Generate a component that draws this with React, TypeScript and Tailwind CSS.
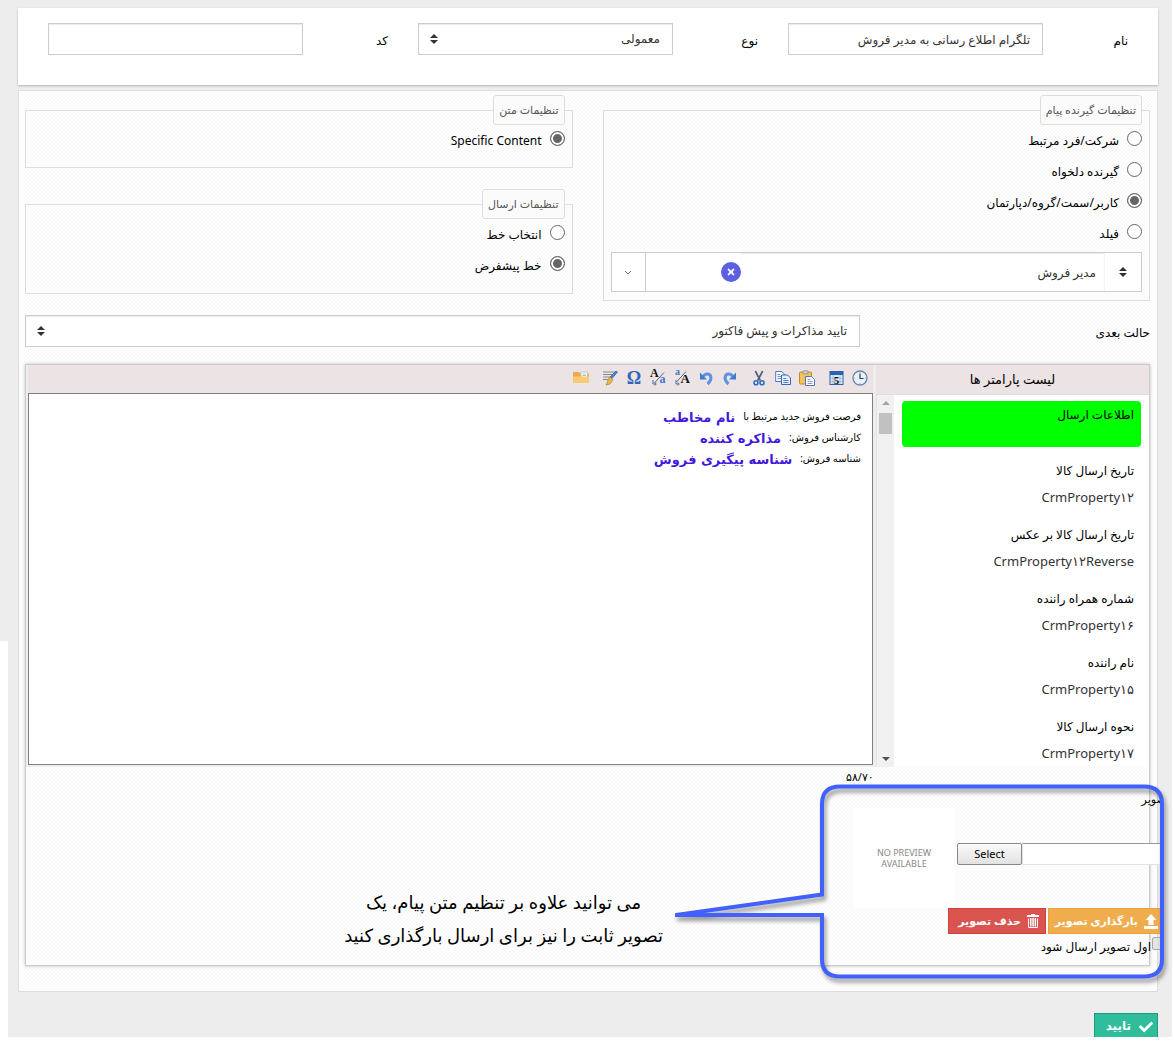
import React, { useState } from "react";
import { FaCheck, FaTimes } from "react-icons/fa";

const SortIcon = ({ className = "" }: { className?: string }) => (
  <svg width="8" height="10" viewBox="0 0 8 10" className={className} aria-hidden="true">
    <path d="M4 0 8 4H0zM0 6h8l-4 4z" fill="#333" />
  </svg>
);

function SelectBox({ id, value }: { id: string; value: string }) {
  return (
    <div className="relative min-w-0 flex-1">
      <select
        id={id}
        className="h-8 w-full appearance-none border border-[#ccc] bg-white pr-3 pl-8 text-xs text-[#333] shadow-[inset_0_1px_1px_rgba(0,0,0,0.08)]"
      >
        <option>{value}</option>
      </select>
      <SortIcon className="pointer-events-none absolute top-[11px] left-3" />
    </div>
  );
}

function TopField({ id, label, children }: { id: string; label: string; children: React.ReactNode }) {
  return (
    <div className="flex min-w-0 flex-1 items-center">
      <label htmlFor={id} className="w-1/4 shrink-0 pt-1">
        {label}
      </label>
      {children}
    </div>
  );
}

const inputClass =
  "h-8 min-w-0 flex-1 border border-[#ccc] bg-white px-3 text-xs text-[#333] shadow-[inset_0_1px_1px_rgba(0,0,0,0.08)]";

function Group({ title, className = "", children }: { title: string; className?: string; children: React.ReactNode }) {
  return (
    <fieldset className={`min-w-0 border border-[#ddd] px-[7px] ${className}`}>
      <legend className="h-[30px] rounded-[3px] border border-[#ddd] bg-[#fbfbfb] px-[5px] text-[11px] leading-7 text-[#555]">
        {title}
      </legend>
      {children}
    </fieldset>
  );
}

function Radios({ name, options, initial }: { name: string; options: string[]; initial: number }) {
  const [picked, setPicked] = useState(initial);
  return (
    <div>
      {options.map((o, i) => (
        <label key={o} className="flex h-[31px] items-start gap-2 pt-1.5 leading-5">
          <input
            type="radio"
            name={name}
            checked={picked === i}
            onChange={() => setPicked(i)}
            className="size-[15px] shrink-0 appearance-none rounded-full border border-[#666] bg-white checked:bg-[#666] checked:shadow-[inset_0_0_0_2px_#fff]"
          />
          {o}
        </label>
      ))}
    </div>
  );
}

const Svg = ({ children }: { children: React.ReactNode }) => (
  <svg width="16" height="16" viewBox="0 0 16 16" className="overflow-visible [direction:ltr]" aria-hidden="true">
    {children}
  </svg>
);

const toolGroups: { name: string; icon: React.ReactNode }[][] = [
  [
    {
      name: "زمان",
      icon: (
        <Svg>
          <circle cx="8" cy="8" r="7" fill="#e9f1fb" stroke="#6f87a8" strokeWidth="1.3" />
          <path d="M8 3.5V8.5H11.5" fill="none" stroke="#333f55" strokeWidth="1.2" />
          <path d="M8 1.8v1M8 13.2v1M1.8 8h1M13.2 8h1" stroke="#6f87a8" strokeWidth="0.8" />
        </Svg>
      ),
    },
    {
      name: "تاریخ",
      icon: (
        <Svg>
          <rect x="2" y="1.5" width="13" height="13" fill="#dce8f7" stroke="#2f5fa5" />
          <rect x="2" y="1.5" width="13" height="3.5" fill="#2c62b4" />
          <path d="M5 5v9M12 5v9M2 8.3h13M2 11.5h13" stroke="#9db8dd" strokeWidth="0.8" />
          <text x="8.5" y="13.5" fontSize="11" fontWeight="bold" fontFamily="Liberation Serif" textAnchor="middle" fill="#111">5</text>
        </Svg>
      ),
    },
  ],
  [
    {
      name: "چسباندن",
      icon: (
        <Svg>
          <rect x="0.5" y="2" width="12" height="12" rx="1" fill="#f3c25c" stroke="#c08a2d" />
          <rect x="4" y="0.8" width="5" height="3" rx="1" fill="#cfd3da" stroke="#7f8794" strokeWidth="0.8" />
          <path d="M6.5 6.5h6l3 3v6h-9z" fill="#fff" stroke="#5577aa" />
          <path d="M8.5 9.5h3M8.5 11.5h5M8.5 13.5h5" stroke="#6c93cf" strokeWidth="0.9" />
        </Svg>
      ),
    },
    {
      name: "رونوشت",
      icon: (
        <Svg>
          <path d="M.7 1.5h6l2.5 2.5v7.5H.7z" fill="#fff" stroke="#4a78c0" />
          <path d="M2.5 4.5h3M2.5 6.5h4.5M2.5 8.5h4.5" stroke="#6c93cf" />
          <path d="M6.5 5h6l3 3v6.500h-9z" fill="#e6f0ff" stroke="#3567b5" />
          <path d="M8.3 8.5h3M8.3 10.5h5.2M8.3 12.5h5.2" stroke="#4a7fd0" />
        </Svg>
      ),
    },
    {
      name: "برش",
      icon: (
        <Svg>
          <path d="M4.3 1 9.3 10.5M11.700 1 6.700 10.5" stroke="#55637a" strokeWidth="1.7" />
          <circle cx="5" cy="12.700" r="2" fill="none" stroke="#2f6bc4" strokeWidth="1.600" />
          <circle cx="11" cy="12.700" r="2" fill="none" stroke="#2f6bc4" strokeWidth="1.600" />
        </Svg>
      ),
    },
  ],
  [
    {
      name: "انجام دوباره",
      icon: (
        <Svg>
          <path d="M6.500 14C1 9.500 3 4 6.500 4c2 0 3.500 1 4 2.500" fill="none" stroke="#5a93e0" strokeWidth="3" />
          <path d="M14 2.500V9.500H7z" fill="#3f7dd3" />
        </Svg>
      ),
    },
    {
      name: "واگرد",
      icon: (
        <Svg>
          <path d="M9.500 14C15 9.500 13 4 9.500 4c-2 0-3.500 1-4 2.500" fill="none" stroke="#5a93e0" strokeWidth="3" />
          <path d="M2 2.500V9.500h7z" fill="#3f7dd3" />
        </Svg>
      ),
    },
    {
      name: "حروف بزرگ",
      icon: (
        <Svg>
          <text x="1" y="5" fontSize="10" fontWeight="bold" fontFamily="Liberation Serif" fill="#3a78d0">a</text>
          <text x="6.500" y="13" fontSize="13" fontWeight="bold" fontFamily="Liberation Serif" fill="#111">A</text>
          <path d="M2.500 12 12 1.500" stroke="#555" strokeWidth="0.900" />
          <path d="M2 10v4h3M3.800 12.500l1.500 1.500-1.500 1.500" fill="none" stroke="#4d6fa8" />
        </Svg>
      ),
    },
    {
      name: "حروف کوچک",
      icon: (
        <Svg>
          <text x="0" y="7" fontSize="12" fontWeight="bold" fontFamily="Liberation Serif" fill="#111">A</text>
          <text x="9.500" y="13" fontSize="12" fontWeight="bold" fontFamily="Liberation Serif" fill="#3a78d0">a</text>
          <path d="M4.500 13 14 2.500" stroke="#555" strokeWidth="0.900" />
          <path d="M3 10v4h3M4.800 12.500l1.500 1.500-1.500 1.500" fill="none" stroke="#4d6fa8" />
        </Svg>
      ),
    },
    {
      name: "نماد",
      icon: (
        <Svg>
          <text x="8" y="14" fontSize="18" fontWeight="bold" fontFamily="Liberation Serif" textAnchor="middle" fill="#2f66b8">Ω</text>
        </Svg>
      ),
    },
    {
      name: "قالب",
      icon: (
        <Svg>
          <path d="M1 2h12M1 4.500h10M1 7h8M1 9.500h5" stroke="#8a8a8a" />
          <path d="m15.500 2-5.500 6.500-2-1.500 6-6z" fill="#4a82d4" stroke="#2d5ca6" strokeWidth="0.700" />
          <path d="M8 7 10.500 9C10 13 8 14.500 4 15 6 13 5.500 8.500 8 7z" fill="#eab84a" stroke="#a87a1c" strokeWidth="0.700" />
        </Svg>
      ),
    },
  ],
  [
    {
      name: "پوشه",
      icon: (
        <Svg>
          <path d="M0 2h6l1 1.500h9V13H0z" fill="#f0a94a" />
          <path d="M8 2h6.500v6H8z" fill="#fff" stroke="#b9bec8" strokeWidth="0.800" />
          <path d="M9.500 4h3.500M9.500 5.500h3.500" stroke="#9aa3b3" strokeWidth="0.700" />
          <path d="M0 6.500h16V13H0z" fill="#fbcb74" />
        </Svg>
      ),
    },
  ],
];

const params = [
  ["تاریخ ارسال کالا", "CrmProperty۱۲"],
  ["تاریخ ارسال کالا بر عکس", "CrmProperty۱۲Reverse"],
  ["شماره همراه راننده", "CrmProperty۱۶"],
  ["نام راننده", "CrmProperty۱۵"],
  ["نحوه ارسال کالا", "CrmProperty۱۷"],
];

const message = [
  ["فرصت فروش جدید مرتبط با", "نام مخاطب"],
  ["کارشناس فروش:", "مذاکره کننده"],
  ["شناسه فروش:", "شناسه پیگیری فروش"],
];

const actionClass =
  "flex h-[26px] shrink-0 items-center gap-1.5 border pr-1.5 text-[11px] font-bold whitespace-nowrap text-white";

export default function App() {
  return (
    <div dir="rtl" className="bg-white pr-0.5 pb-1.5 font-['Noto_Sans','DejaVu_Sans',sans-serif] text-xs text-black">
      <main className="relative bg-[#ededed] pt-2 pr-3.5 pl-[18px]">
        <div className="absolute top-[641px] bottom-0 left-0 w-2 bg-white" />

        <section className="flex h-[77px] items-start gap-[30px] bg-white px-[30px] pt-[15px] shadow-[0_1px_2px_rgba(0,0,0,0.25)]">
          <TopField id="name" label="نام">
            <input id="name" defaultValue="تلگرام اطلاع رسانی به مدیر فروش" className={inputClass} />
          </TopField>
          <TopField id="kind" label="نوع">
            <SelectBox id="kind" value="معمولی" />
          </TopField>
          <TopField id="code" label="کد">
            <input id="code" className={inputClass} />
          </TopField>
        </section>

        <section className="mt-[5px] border border-[#ddd] bg-[conic-gradient(#fafafa_25%,#fefefe_0_50%,#fafafa_0_75%,#fefefe_0)] bg-[length:4px_4px] pt-1 pr-[7px] pb-[25px] pl-1.5">
          <div className="grid grid-cols-2 items-start gap-[30px]">
            <Group title="تنظیمات گیرنده پیام" className="pb-2">
              <Radios
                name="receiver"
                initial={2}
                options={["شرکت/فرد مرتبط", "گیرنده دلخواه", "کاربر/سمت/گروه/دپارتمان", "فیلد"]}
              />
              <div className="mt-[3px] flex h-10 items-center border border-[#ccc] bg-white">
                <button type="button" aria-label="نوع گیرنده" className="flex h-full w-9 items-center justify-center">
                  <SortIcon />
                </button>
                <input
                  aria-label="گیرنده"
                  defaultValue="مدیر فروش"
                  className="h-full min-w-0 flex-1 border-r border-[#f3f3f3] bg-white px-2 text-xs text-[#333] shadow-[inset_0_1px_1px_rgba(0,0,0,0.08)]"
                />
                <button
                  type="button"
                  aria-label="حذف گیرنده"
                  className="ml-[75px] flex size-5 items-center justify-center rounded-full bg-[#5b5fe0] text-white"
                >
                  <FaTimes size={10} />
                </button>
                <button
                  type="button"
                  aria-label="باز کردن فهرست"
                  className="flex h-full w-[34px] items-center justify-center border-r border-[#ccc]"
                >
                  <svg width="8" height="5" viewBox="0 0 8 5" aria-hidden="true">
                    <path d="m1 1 3 3 3-3" fill="none" stroke="#666" />
                  </svg>
                </button>
              </div>
            </Group>
            <div className="min-w-0">
              <Group title="تنظیمات متن" className="pb-[11px]">
                <Radios name="content" initial={0} options={["Specific Content"]} />
              </Group>
              <Group title="تنظیمات ارسال" className="mt-[21px] pb-3">
                <Radios name="line" initial={1} options={["انتخاب خط", "خط پیشفرض"]} />
              </Group>
            </div>
          </div>

          <div className="mt-3.5 flex items-center">
            <label htmlFor="next" className="w-[290px] shrink-0 pt-1">
              حالت بعدی
            </label>
            <SelectBox id="next" value="تایید مذاکرات و پیش فاکتور" />
          </div>

          <div className="relative mt-[17px] border border-[#ccc] shadow-[0_0_3px_rgba(0,0,0,0.25)]">
            <div className="flex h-[402px] bg-[#eee]">
              <div className="flex w-[273px] shrink-0 flex-col">
                <h2 className="flex h-[30px] items-center justify-center border-b border-[#ddd] bg-[#ece3e4] text-[13px]">
                  لیست پارامتر ها
                </h2>
                <div className="flex min-h-0 flex-1 bg-white">
                  <ul className="min-w-0 flex-1 overflow-hidden px-2 pt-1.5">
                    <li className="mb-3.5 h-[46px] rounded bg-[#0f0] px-[7px] pt-1 leading-5">اطلاعات ارسال</li>
                    {params.map(([title, key]) => (
                      <li key={key} className="mb-[18px] flex flex-col gap-1.5 px-[7px] leading-5">
                        <span>{title}</span>
                        <span className="text-[13px] leading-5 text-[#333]">{key}</span>
                      </li>
                    ))}
                  </ul>
                  <div className="flex w-[18px] flex-col items-center border-l border-[#e4e4e4] bg-[#f1f1f1] py-1.5">
                    <svg width="8" height="4" viewBox="0 0 8 4" aria-hidden="true">
                      <path d="M4 0 8 4H0z" fill="#a3a3a3" />
                    </svg>
                    <div className="mt-2 h-[21px] w-[13px] bg-[#c1c1c1]" />
                    <svg width="8" height="4" viewBox="0 0 8 4" className="mt-auto" aria-hidden="true">
                      <path d="M4 4 8 0H0z" fill="#505050" />
                    </svg>
                  </div>
                </div>
              </div>

              <div className="mr-[3px] flex min-w-0 flex-1 flex-col pl-0.5">
                <div className="flex h-7 items-center gap-[5px] bg-[#ece3e4] pr-px pb-0.5">
                  {toolGroups.map((g, i) => (
                    <div key={i} className="flex">
                      {g.map((t) => (
                        <button key={t.name} type="button" aria-label={t.name} className="flex h-6 w-6 items-center justify-center">
                          {t.icon}
                        </button>
                      ))}
                    </div>
                  ))}
                </div>
                <div
                  role="textbox"
                  aria-label="متن پیام"
                  contentEditable
                  suppressContentEditableWarning
                  className="mb-0.5 flex-1 border border-[#808080] bg-white px-[11px] pt-3 text-[10px] leading-[21px] outline-none"
                >
                  {message.map(([lead, field]) => (
                    <p key={field} className="flex h-[21px] items-center gap-2">
                      <span>{lead}</span>
                      <b className="pt-0.5 font-['DejaVu_Sans'] text-[13px] text-[#4318dc]">{field}</b>
                    </p>
                  ))}
                </div>
              </div>
            </div>

            <div className="flex h-[198px]">
              <div className="-mr-3 w-[340px] shrink-0 overflow-hidden">
                <div className="-mr-2 flex h-[41px] items-start justify-between">
                  <label htmlFor="file" className="pt-[22px] text-[11px] leading-5">
                    تصویر
                  </label>
                  <output className="ml-[25px] text-[11px] leading-5">۵۸/۷۰</output>
                </div>
                <div className="flex h-[100px] items-center">
                  <input
                    id="file"
                    className="mb-2 h-[22px] min-w-0 flex-1 border border-[#dfe3ee] border-t-[#999] bg-white px-2"
                  />
                  <button
                    type="button"
                    className="mb-2 h-[22px] w-[65px] rounded-[2px] border border-[#888] bg-linear-to-b from-[#fafafa] to-[#e2e2e2] text-[11px] leading-4"
                  >
                    Select
                  </button>
                  <div className="mr-[3px] ml-[33px] flex size-[100px] items-center justify-center bg-white text-center text-[9px] leading-[11px] text-[#888]">
                    NO PREVIEW
                    <br />
                    AVAILABLE
                  </div>
                </div>
                <div className="-mr-1 flex gap-0.5">
                  <button type="button" className={`${actionClass} w-[117px] border-[#eea236] bg-[#f0ad4e]`}>
                    <svg width="14" height="15" viewBox="0 0 14 15" className="shrink-0" aria-hidden="true">
                      <path d="M7 0 12.500 6H9.500v5h-5V6h-3zM0 12h14v3H0z" fill="#fff" />
                    </svg>
                    بارگذاری تصویر
                  </button>
                  <button type="button" className={`${actionClass} w-[98px] border-[#d43f3a] bg-[#d9534f]`}>
                    <svg width="12" height="14" viewBox="0 0 12 14" className="shrink-0" aria-hidden="true">
                      <path d="M4 0h4v1h4v2H0V1h4z" fill="#fff" />
                      <path d="M1.500 4.500v9h9v-9" fill="none" stroke="#fff" />
                      <path d="M3 4h1.500v8.500H3zM5.300 4h1.500v8.500H5.300zM7.600 4h1.500v8.500H7.600z" fill="#fff" />
                    </svg>
                    حذف تصویر
                  </button>
                </div>
                <label className="-mr-1 flex items-start gap-px pt-[3px] leading-5">
                  <input type="checkbox" className="size-[13px] shrink-0 appearance-none rounded-[2px] border border-[#aaa] bg-[#e4e4e4]" />
                  اول تصویر ارسال شود
                </label>
              </div>
              <p className="mr-[158px] pt-[120px] text-center font-['Liberation_Serif','DejaVu_Sans',serif] text-[18px] leading-[33px] whitespace-nowrap">
                می توانید علاوه بر تنظیم متن پیام، یک
                <br />
                تصویر ثابت را نیز برای ارسال بارگذاری کنید
              </p>
            </div>

            <svg
              width="495"
              height="202"
              viewBox="675 783 495 202"
              className="pointer-events-none absolute -right-5 -bottom-5 drop-shadow-[2px_4px_2px_rgba(0,0,0,0.4)]"
              aria-hidden="true"
            >
              <path
                d="M677 915 823 894.500V804Q823 786.500 841 786.500H1145Q1163 786.500 1163 804V959Q1163 976.500 1145 976.500H841Q823 976.500 823 959V915H676"
                fill="none"
                stroke="#4260fb"
                strokeWidth="4"
              />
            </svg>
          </div>
        </section>

        <div className="mt-[21px] h-6 overflow-hidden">
          <button
            type="button"
            className="flex h-8 w-16 items-start gap-2 border border-[#1f9c7d] bg-[#2fbd9b] pt-0.5 pr-1 font-bold text-white"
          >
            <FaCheck size={14} className="mt-1" />
            <span className="leading-5">تایید</span>
          </button>
        </div>
      </main>
    </div>
  );
}
